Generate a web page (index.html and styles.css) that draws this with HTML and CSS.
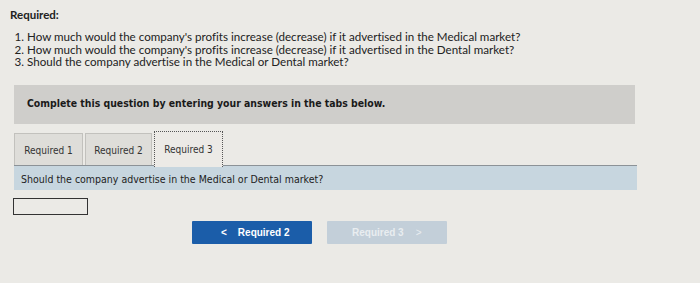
FILE: index.html
```html
<!DOCTYPE html>
<html>
<head>
<meta charset="utf-8">
<link rel="stylesheet" href="styles.css">
</head>
<body>
<div class="page">
  <div class="req-title">Required:</div>
  <ol class="questions">
    <li>How much would the company's profits increase (decrease) if it advertised in the Medical market?</li>
    <li>How much would the company's profits increase (decrease) if it advertised in the Dental market?</li>
    <li>Should the company advertise in the Medical or Dental market?</li>
  </ol>
  <div class="instructions">Complete this question by entering your answers in the tabs below.</div>
  <div class="tabs">
    <div class="tab">Required 1</div>
    <div class="tab">Required 2</div>
    <div class="tab active">Required 3</div>
  </div>
  <div class="prompt">Should the company advertise in the Medical or Dental market?</div>
  <div class="answer"></div>
  <div class="nav">
    <button class="btn prev"><span class="chev">&lt;</span>Required 2</button>
    <button class="btn next">Required 3<span class="chev">&gt;</span></button>
  </div>
</div>
</body>
</html>
```
FILE: styles.css
```css
html, body {
  margin: 0;
  padding: 0;
  background: #ebeae6;
}
.page {
  width: 700px;
  height: 283px;
  padding: 8px 0 0 0;
  box-sizing: border-box;
  font-family: Lato, "Open Sans", sans-serif;
  font-variant-ligatures: none;
  color: #222;
}
.req-title {
  margin-left: 10px;
  font-weight: 700;
  font-size: 11.5px;
  line-height: 14px;
}
.questions {
  margin: 9px 0 0 0;
  padding-left: 27px;
  font-size: 11.6px;
  line-height: 12.5px;
}
.instructions {
  margin: 16px 0 0 14px;
  width: 621px;
  height: 39px;
  box-sizing: border-box;
  padding: 12px 0 0 13px;
  background: #cfcecb;
  font-family: "DejaVu Sans Condensed", "DejaVu Sans", sans-serif;
  font-weight: 700;
  font-size: 10.4px;
  color: #1a1a1a;
}
.tabs {
  display: flex;
  margin: 7px 0 0 14px;
  gap: 2px;
  align-items: flex-end;
  height: 34px;
}
.tab {
  width: 69px;
  height: 32px;
  box-sizing: border-box;
  border: 1px solid #c2c1bd;
  border-bottom: none;
  background: #deddd9;
  font-family: "DejaVu Sans Condensed", "DejaVu Sans", sans-serif;
  font-size: 10px;
  color: #333;
  display: flex;
  align-items: center;
  justify-content: center;
  padding-top: 2px;
}
.tab:nth-child(2) { width: 67px; }
.tab.active {
  height: 36px;
  width: 69px;
  border: 1px dotted #555;
  border-bottom: none;
  background: #eceae6;
  margin-bottom: -2px;
  padding-top: 0;
}
.prompt {
  margin: 0 0 0 14px;
  width: 623px;
  height: 25px;
  box-sizing: border-box;
  border-top: 1px solid #8c9297;
  background: #c7d6df;
  padding: 7px 0 0 7px;
  font-family: "DejaVu Sans Condensed", "DejaVu Sans", sans-serif;
  font-size: 10.5px;
  color: #222;
}
.answer {
  margin: 8px 0 0 13px;
  width: 75px;
  height: 17px;
  box-sizing: border-box;
  border: 1px solid #333;
}
.nav {
  display: flex;
  gap: 15px;
  margin: 6px 0 0 192px;
}
.btn {
  height: 23px;
  border: none;
  border-radius: 1px;
  font-family: "Liberation Sans", Arial, sans-serif;
  font-weight: 700;
  font-size: 10px;
  display: flex;
  align-items: center;
  padding: 0;
}
.btn.prev {
  width: 120px;
  background: #1b5da9;
  color: #fff;
  padding-left: 29px;
}
.btn.prev .chev {
  font-weight: 700;
  margin-right: 11px;
}
.btn.next {
  width: 120px;
  background: #c3cfd9;
  color: #e9edf0;
  padding-left: 25px;
}
.btn.next .chev {
  font-weight: 400;
  margin-left: 12px;
}
```
